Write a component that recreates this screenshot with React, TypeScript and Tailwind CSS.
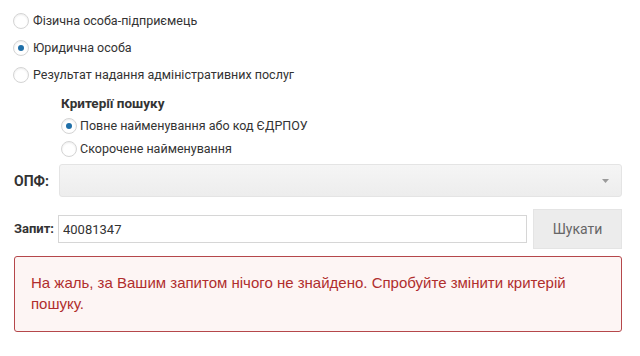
import React from "react";

const Radio = ({ checked }: { checked?: boolean }) => (
  <span className="flex h-[16px] w-[16px] shrink-0 items-center justify-center rounded-full border border-[#d4d4d4] bg-white shadow-[inset_0_1px_2px_rgba(0,0,0,0.08)]">
    {checked && <span className="h-[6px] w-[6px] rounded-full bg-[#1f6fa8]" />}
  </span>
);

export default function App() {
  return (
    <div className="min-h-[356px] w-[640px] bg-white text-[12.5px] leading-[20px] text-[#333] [font-family:Roboto,'Noto_Sans',sans-serif]">
      <div className="flex flex-col gap-[7px] pl-[13px] pt-[11px]">
        <label className="flex items-center gap-[4px]">
          <Radio />
          <span>Фізична особа-підприємець</span>
        </label>
        <label className="flex items-center gap-[4px]">
          <Radio checked />
          <span>Юридична особа</span>
        </label>
        <label className="flex items-center gap-[4px]">
          <Radio />
          <span>Результат надання адміністративних послуг</span>
        </label>
      </div>

      <div className="mt-[8px] flex flex-col gap-[3px] pl-[61px]">
        <div className="text-[13.5px] font-bold">Критерії пошуку</div>
        <label className="flex items-center gap-[3px]">
          <Radio checked />
          <span>Повне найменування або код ЄДРПОУ</span>
        </label>
        <label className="flex items-center gap-[3px]">
          <Radio />
          <span>Скорочене найменування</span>
        </label>
      </div>

      <div className="mt-[5px] flex items-center pl-[14px] pr-[18px]">
        <span className="w-[45px] text-[14px] font-bold">ОПФ:</span>
        <div className="flex h-[33px] flex-1 items-center justify-end rounded-[3px] border border-[#e4e4e4] bg-gradient-to-b from-[#f5f5f5] to-[#ededed] pr-[12px]">
          <svg width="7" height="4" viewBox="0 0 7 4">
            <path d="M0 0h7L3.5 4z" fill="#9a9a9a" />
          </svg>
        </div>
      </div>

      <div className="mt-[12px] flex items-center pl-[14px] pr-[18px]">
        <span className="w-[44px] text-[13px] font-bold">Запит:</span>
        <input
          readOnly
          value="40081347"
          className="h-[28px] w-[469px] border border-[#d6d6d6] bg-white px-[4px] text-[13px] text-[#333] outline-none"
        />
        <button className="ml-[6px] h-[40px] flex-1 border border-[#e4e4e4] bg-[#ececec] text-[14px] text-[#666]">
          Шукати
        </button>
      </div>

      <div className="mx-[14px] mr-[18px] mt-[7px] rounded-[3px] border border-[#b5474b] bg-[#fdf5f4] px-[16px] pb-[17px] pt-[15px] text-[15px] leading-[21px] text-[#b02d2d] [font-family:'Liberation_Sans',Arial,sans-serif]">
        На жаль, за Вашим запитом нічого не знайдено. Спробуйте змінити критерій пошуку.
      </div>
    </div>
  );
}
